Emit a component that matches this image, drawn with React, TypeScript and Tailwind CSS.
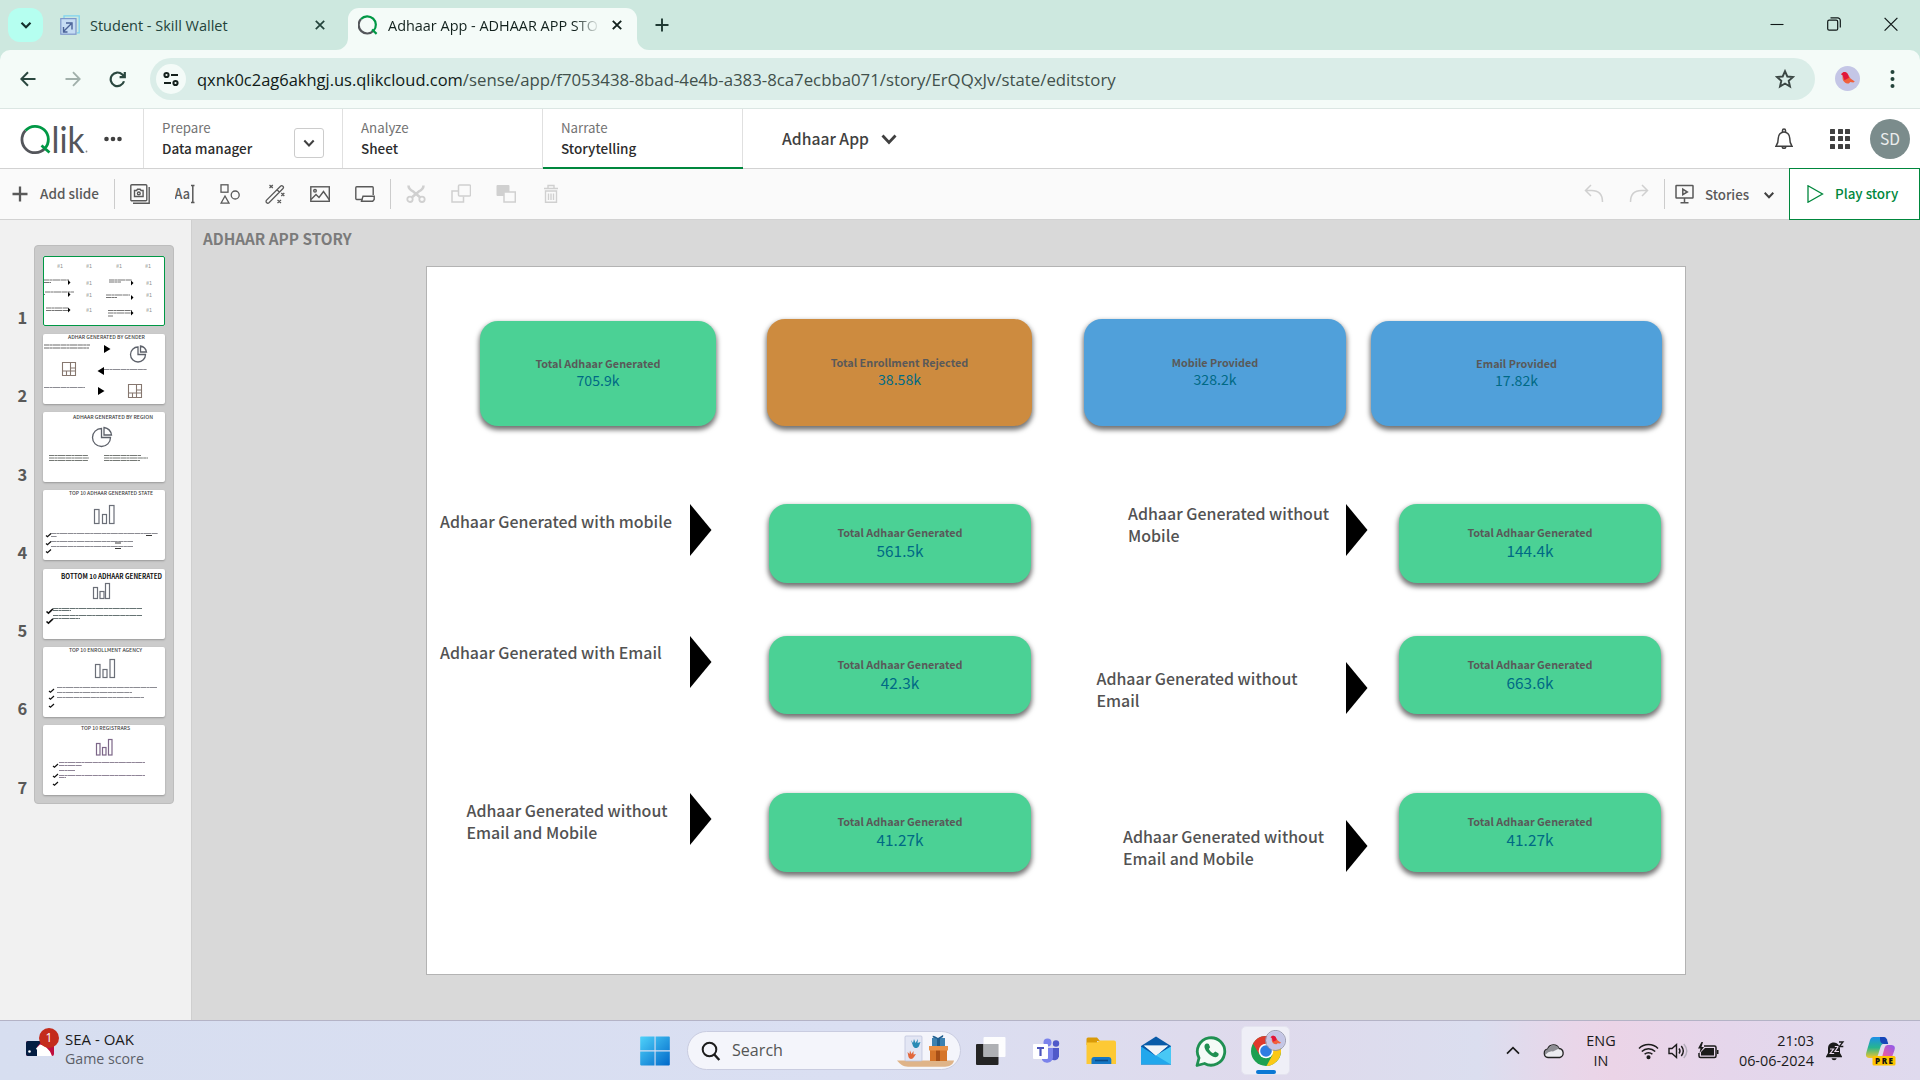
import type { ReactNode } from "react";

type Line = [number, number, number];
type Rect = [number, number, number, number];

/* ---------- Browser chrome ---------- */

function Glyph({ d, w = 20, vb = "0 0 20 20", sw = 1.6, c = "currentColor", children }: { d?: string; w?: number; vb?: string; sw?: number; c?: string; children?: ReactNode }) {
  return (
    <svg width={w} height={w} viewBox={vb} fill="none" stroke={c} strokeWidth={sw} className="shrink-0">
      {d && <path d={d} />}
      {children}
    </svg>
  );
}

function TabStrip() {
  return (
    <div className="flex h-[50px] bg-[#cde8df] font-['Open_Sans',sans-serif]">
      <div className="mt-2 ml-2 flex h-[34px] w-[35px] items-center justify-center rounded-xl bg-[#b5fff0] text-[#14302c]">
        <Glyph w={12} vb="0 0 12 12" sw={2.2} d="M1.5 3.8 6 8.2l4.5-4.4" />
      </div>
      <div className="ml-[17px] flex h-[50px] w-[288px] items-center text-[#23433b]">
        <svg width="20" height="20" viewBox="0 0 20 20" fill="none" className="shrink-0">
          <path d="M4 3V.8h15.200v17H17" stroke="#7fd3f0" strokeWidth="1.300" />
          <rect x=".8" y="3.600" width="15.200" height="15.600" fill="#c5dcf3" stroke="#7d97cb" strokeWidth="1.200" />
          <path d="M3.500 16.500 11 9M6 8h6v6.500M3.500 12v5h4" stroke="#4a6298" strokeWidth="1.400" />
        </svg>
        <span className="mt-px ml-[10px] w-[225px] text-[14.5px] whitespace-nowrap">Student - Skill Wallet</span>
        <Glyph w={10} vb="0 0 10 10" sw={1.7} d="m.8.8 8.4 8.4M9.2.8.8 9.2" />
      </div>
      <div className="relative mt-2 flex h-[42px] w-[289px] items-center rounded-t-[11px] bg-[#f4fbf8] pb-2 pl-[10px] text-[#12211d]">
        <svg className="absolute bottom-0 -left-3" width="12" height="12"><path d="M12 0v12H0A12 12 0 0 0 12 0" fill="#f4fbf8" /></svg>
        <svg className="absolute -right-3 bottom-0" width="12" height="12"><path d="M0 0v12h12A12 12 0 0 1 0 0" fill="#f4fbf8" /></svg>
        <svg width="20" height="20" viewBox="0 0 20 20" fill="none" className="shrink-0">
          <path d="M15.500 15.800A8.400 8.400 0 1 1 3 4" stroke="#54565b" strokeWidth="2.200" />
          <path d="M3 4a8.400 8.400 0 1 1 12.500 11.800M14 14.500l4.600 4.400" stroke="#009845" strokeWidth="2.200" />
        </svg>
        <span className="mt-px ml-[10px] w-[212px] text-[14.450px] whitespace-nowrap [mask-image:linear-gradient(to_right,#000_88%,transparent_100%)]">Adhaar App - ADHAAR APP STO</span>
        <div className="ml-[12px]"><Glyph w={10} vb="0 0 10 10" sw={1.9} d="m.8.8 8.4 8.4M9.2.8.8 9.2" /></div>
      </div>
      <div className="mt-[18px] ml-[18px] text-[#1f3a33]"><Glyph w={14} vb="0 0 14 14" sw={1.9} d="M7 .5v13M.5 7h13" /></div>
      <div className="mt-[17px] mr-[22px] ml-auto flex gap-[43px] text-[#101818]">
        <Glyph w={14} vb="0 0 14 14" sw={1.1} d="M.5 7.5h13" />
        <Glyph w={14} vb="0 0 14 14" sw={1.2}>
          <rect x=".7" y="3.2" width="10" height="10" rx="1.5" />
          <path d="M3.5.8h7.200a2.600 2.600 0 0 1 2.600 2.600v7" />
        </Glyph>
        <Glyph w={14} vb="0 0 14 14" sw={1.2} d="m.6.8 12.800 12.800M13.400.8.6 13.600" />
      </div>
    </div>
  );
}

function Bird({ w }: { w: number }) {
  return (
    <svg width={w} height={w} viewBox="0 0 25 25">
      <circle cx="12.5" cy="12.5" r="12.5" fill="#c4c6e6" />
      <path d="M6 8.200 8 6.600c2-1.200 4-.2 5 2l2.500 4 4.300 3-1.500 1-3-.6-1.500 1.500c-3 .3-6-2-6.200-5L7.500 9Z" fill="#f0603c" />
      <path d="M6 8.200 8 6.600c2-1.200 4-.2 5 2l1 3.200-4.500 2.500L7.500 9Z" fill="#e0163c" />
    </svg>
  );
}

function AddressBar() {
  return (
    <div className="bg-[#cde8df]">
      <div className="flex h-[59px] items-start rounded-t-[10px] border-b border-[#dbe6e3] bg-[#f4fbf8] pt-2 font-['Open_Sans',sans-serif] text-[#2a473f]">
        <div className="mt-[13px] ml-[20px] flex w-[130px]">
          <Glyph w={16} vb="0 0 16 16" sw={2} d="M15.500 8H1.500M8 1.200 1.300 8 8 14.800" />
          <div className="ml-[29px]"><Glyph w={16} vb="0 0 16 16" sw={1.800} c="#a1b0ab" d="M.5 8h14M8 1.200 14.700 8 8 14.800" /></div>
          <div className="ml-[28px]"><Glyph w={17} vb="0 0 17 17" sw={2.200} d="M15 10.300A6.800 6.800 0 1 1 13.300 3.500L15.500 5.700M15.800 1v5.200h-5.200" /></div>
        </div>
        <div className="flex h-[42px] w-[1665px] items-center rounded-full bg-[#daede8] pr-[20px] pl-[6px]">
          <div className="flex size-[30px] items-center justify-center rounded-full bg-[#f4fbf8] text-[#14211d]">
            <Glyph w={16} vb="0 0 16 16" sw={2}>
              <circle cx="3.500" cy="4" r="2.100" /><path d="M8 4h7M1 12h7" /><circle cx="12.500" cy="12" r="2.100" />
            </Glyph>
          </div>
          <div className="mt-px ml-[11px] text-[16.790px] whitespace-nowrap text-[#41504b]">
            <span className="text-[16.480px] text-[#101a17]">qxnk0c2ag6akhgj.us.qlikcloud.com</span>/sense/app/f7053438-8bad-4e4b-a383-8ca7ecbba071/story/ErQQxJv/state/editstory
          </div>
          <svg className="ml-auto text-[#3b4744]" width="20" height="20" viewBox="0 0 20 20" fill="none" stroke="currentColor" strokeWidth="1.900">
            <path d="m10 2.200 2.300 5.300 5.700.5-4.300 3.800 1.300 5.700-5-3-5 3 1.300-5.700L2 8l5.700-.5Z" />
          </svg>
        </div>
        <div className="mt-2 ml-[20px]"><Bird w={25} /></div>
        <svg className="mt-[11px] ml-[30px]" width="5" height="20" fill="#23433b"><circle cx="2.500" cy="3" r="2" /><circle cx="2.500" cy="10" r="2" /><circle cx="2.500" cy="17" r="2" /></svg>
      </div>
    </div>
  );
}

/* ---------- Qlik header ---------- */

function NavSection({ top, label, className, children }: { top: string; label: string; className: string; children?: ReactNode }) {
  return (
    <div className={`relative flex h-[59px] border-l border-[#e0e0e0] pt-[9px] pl-[18px] ${className}`}>
      <div className="leading-5 whitespace-nowrap">
        <div className="text-[13.300px] text-[#737373]">{top}</div>
        <div className="text-[13.500px] font-medium text-[#2c2c2c]">{label}</div>
      </div>
      {children}
    </div>
  );
}

function QlikHeader() {
  return (
    <div className="flex h-[60px] border-b border-[#d2d2d2] bg-white">
      <div className="flex w-[143px]">
        <svg width="143" height="59" viewBox="0 0 143 59" fill="none">
          <path d="M44.800 39.500A12.800 12.800 0 0 1 25.500 21.500" stroke="#54565b" strokeWidth="2.800" />
          <path d="M25.500 21.500A12.800 12.800 0 1 1 44.800 39.500M41.500 36.500l8 7" stroke="#009845" strokeWidth="2.800" />
          <text x="51.500" y="43.500" textLength="33" lengthAdjust="spacingAndGlyphs" fontFamily="Lato" fontSize="36" fill="#54565b">lik</text>
          <circle cx="86.500" cy="42.500" r=".9" fill="#888" />
          <g fill="#404040"><circle cx="106.500" cy="30" r="2.300" /><circle cx="113" cy="30" r="2.300" /><circle cx="119.500" cy="30" r="2.300" /></g>
        </svg>
      </div>
      <NavSection top="Prepare" label="Data manager" className="w-[199px]">
        <div className="absolute top-[19px] left-[150px] flex h-[30px] w-[30px] items-center justify-center rounded-[3px] border border-[#ccc] text-[#404040]">
          <Glyph w={12} vb="0 0 12 12" sw={2} d="M1.300 3.500 6 8.500l4.700-5" />
        </div>
      </NavSection>
      <NavSection top="Analyze" label="Sheet" className="w-[200px]" />
      <NavSection top="Narrate" label="Storytelling" className="w-[201px] border-r">
        <div className="absolute -right-px -bottom-px left-0 h-[2px] bg-[#00873d]" />
      </NavSection>
      <div className="ml-[39px] flex items-center text-[15.700px] font-medium text-[#404040]">
        Adhaar App
        <div className="mt-px ml-[12px]"><Glyph w={16} vb="0 0 16 16" sw={2.800} d="m1.500 4.500 6.500 7 6.500-7" /></div>
      </div>
      <div className="mr-[10px] ml-auto flex items-center text-[#404040]">
        <svg width="18" height="22" viewBox="0 0 18 22" fill="none" stroke="currentColor" strokeWidth="1.500">
          <path d="M1 18.200h16c-2-2.500-2.300-4-2.300-8.200a5.700 6 0 0 0-11.400 0c0 4.200-.3 5.700-2.300 8.200ZM7.500 4V2.500a1.500 1.500 0 0 1 3 0V4M7.200 18.500a1.800 1.800 0 0 0 3.600 0" />
        </svg>
        <div className="ml-[37px] grid grid-cols-3 gap-[2.500px]">
          {Array.from({ length: 9 }, (_, i) => <span key={i} className="size-[5px] rounded-[0.500px] bg-[#404040]" />)}
        </div>
        <div className="ml-[20px] flex size-[40px] items-center justify-center rounded-full bg-[#7b8c8c] text-[15.600px] text-[#ececec]">SD</div>
      </div>
    </div>
  );
}

function Toolbar() {
  const grey = "#595959";
  const off = "#d0d0d0";
  return (
    <div className="flex h-[51px] items-center border-b border-[#d2d2d2] bg-[#fafafa] font-medium text-[#595959]">
      <div className="ml-3"><Glyph w={16} vb="0 0 16 16" sw={2.300} d="M8 .5v15M.5 8h15" /></div>
      <span className="-mt-px ml-3 w-[60px] text-[13.500px] whitespace-nowrap">Add slide</span>
      <div className="ml-[14px] h-[30px] w-px bg-[#ccc]" />
      <div className="ml-[15px] flex gap-[25px]">
        <Glyph c={grey} sw={1.400}>
          <rect x=".8" y=".8" width="16" height="16" rx="1" /><path d="M3 19.200h16.200V3" /><path d="M4.500 6.500h2l1-1.300h2.600l1 1.300h2v6h-8.600Z" /><circle cx="8.800" cy="9.400" r="1.400" />
        </Glyph>
        <Glyph c={grey} sw={1.500}>
          <text x="-.5" y="15" fontFamily="Noto Sans CJK SC" fontSize="14" fontWeight="500" stroke="none" fill={grey} textLength="15.500" lengthAdjust="spacingAndGlyphs">Aa</text>
          <path d="M16 1.500h3.500M16 18.500h3.500M17.800 1.500v17" />
        </Glyph>
        <Glyph c={grey} sw={1.300}>
          <rect x="1" y=".8" width="7" height="7.400" /><circle cx="15.200" cy="11" r="4" /><path d="m5 12 4 7.200H1Z" />
        </Glyph>
        <Glyph c={grey} sw={1.300}>
          <path d="M15.500 2.200a1.700 1.700 0 0 1 2.500 2.300L4 18.800a1.800 1.800 0 0 1-2.600-2.400ZM12 5.800l2.500 2.500M4.500 1l3.300 3M7.800 1 4.500 4M16.300 9l3 3M19.300 9l-3 3M12.500 16l3.500 3M16 16l-3.500 3" />
        </Glyph>
        <Glyph c={grey} sw={1.400}>
          <rect x=".8" y="2.800" width="18.500" height="14.500" /><circle cx="5" cy="6.800" r="1.300" /><path d="m1 15.500 5-5 3 3 4.500-6 6 8.500" />
        </Glyph>
        <Glyph c={grey} sw={1.400}>
          <path d="M7.500 15.500H1.700a.9.900 0 0 1-.9-.9V3.700c0-.5.400-.9.900-.9h15.600c.5 0 .9.400.9.900V11" /><path d="M8 12.200h11.200v3.300l-1.500 1.800H6.500Z" />
        </Glyph>
      </div>
      <div className="ml-[15px] h-[30px] w-px bg-[#ccc]" />
      <div className="ml-[15px] flex gap-[25px]">
        <Glyph c={off} sw={1.800}>
          <circle cx="4" cy="15.300" r="2.700" /><circle cx="16" cy="15.300" r="2.700" />
          <path d="M2.500 1.500c0 3.500 2.500 5 5 6.200l6.500 5.600M17.500 1.500c0 3.500-2.500 5-5 6.200L6 13.300" strokeWidth="2.500" />
        </Glyph>
        <Glyph c={off} sw={1.500}><rect x="7.500" y="1" width="12" height="11" rx="1" /><path d="M7 7H1v11h11.500v-5.500" /></Glyph>
        <Glyph c={off} sw={1.500}><rect x=".5" y="1" width="13" height="11" rx="1" fill={off} stroke="none" /><rect x="8" y="8" width="11.300" height="10" fill="#fafafa" /></Glyph>
        <Glyph c={off} sw={1.400}><path d="M3 4.500h14M7 4V1.500h6V4M4.500 7v11.300h11V7ZM7.500 9.500v6.500M10 9.500v6.500M12.500 9.500v6.500" /></Glyph>
      </div>
      <div className="ml-auto flex items-center">
        <Glyph c={off} sw={1.500} d="M7 1 1.500 6.500 7 12M2 6.500h5.500C14 6.500 18.500 10 18.500 18" />
        <div className="ml-[25px]"><Glyph c={off} sw={1.500} d="m13 1 5.500 5.500L13 12M18 6.500h-5.500C6 6.500 1.500 10 1.500 18" /></div>
        <div className="ml-[15px] h-[30px] w-px bg-[#ccc]" />
        <div className="ml-[10px]">
          <Glyph c={grey} sw={1.500}><rect x="1" y="1.500" width="17" height="12.500" rx=".6" /><path d="M9.500 14v4.500M5.500 18.800h8M7.800 5.200 12.300 8l-4.500 2.600Z" /></Glyph>
        </div>
        <span className="mt-px ml-[10px] w-[45px] text-[13.300px]">Stories</span>
        <div className="mt-0.5 ml-[14px]"><Glyph w={10} vb="0 0 10 10" sw={2} c="#404040" d="m.7 2.800 4.300 4.400 4.300-4.400" /></div>
        <div className="-my-px ml-[15px] flex h-[52px] w-[131px] items-center border border-[#00873d] bg-white pl-[17px] text-[#00873d]">
          <Glyph w={18} vb="0 0 18 18" sw={1.300} d="M1 .8v16.400L15.500 9Z" />
          <span className="-mt-px ml-[10px] text-[13.400px] whitespace-nowrap">Play story</span>
        </div>
      </div>
    </div>
  );
}

/* ---------- Slide thumbnails ---------- */

function TextLines({ lines, c = "#55555f" }: { lines: Line[]; c?: string }) {
  return <g stroke={c} strokeWidth="0.800" opacity="0.850">{lines.map(([x1, x2, y], i) => <path key={i} d={`M${x1} ${y}H${x2}`} strokeDasharray="5.300 .3 3.100 .3 7.400 .4" />)}</g>;
}
function Checks({ at, s = 1 }: { at: [number, number][]; s?: number }) {
  return <g fill="none" stroke="#111" strokeWidth={1.200 * s}>{at.map(([x, y], i) => <path key={i} d={`M${x} ${y}l${1.500 * s} ${1.300 * s}l${3.500 * s} ${-3.300 * s}`} />)}</g>;
}
function Bars({ rects, c = "#6b6f78" }: { rects: Rect[]; c?: string }) {
  return <g fill="none" stroke={c} strokeWidth="1.200">{rects.map(([x, y, w, h], i) => <rect key={i} x={x} y={y} width={w} height={h} />)}</g>;
}
function Title({ x, w, y = 5, bold = false, children }: { x: number; w: number; y?: number; bold?: boolean; children: string }) {
  return <text x={x} y={y} textLength={w} lengthAdjust="spacingAndGlyphs" fontFamily="Noto Sans CJK SC" fontSize={bold ? 6.800 : 5.200} fontWeight={bold ? 700 : 500} fill={bold ? "#111" : "#444"}>{children}</text>;
}
function Pie({ x, y, r }: { x: number; y: number; r: number }) {
  return <path d={`M${x - 1} ${y - r + 1}V${y + 1}H${x + r - 1}A${r} ${r} 0 1 1 ${x - 1} ${y - r + 1}ZM${x + 1.500} ${y - r}V${y - 1.500}H${x + r}A${r} ${r} 0 0 0 ${x + 1.500} ${y - r}Z`} fill="none" stroke="#5d616a" strokeWidth="1.300" />;
}
function Treemap({ x, y }: { x: number; y: number }) {
  return <path d={`M${x} ${y}h13v13h-13ZM${x + 8} ${y}v13M${x} ${y + 8.500}h13M${x + 8} ${y + 5.500}h5M${x + 4} ${y + 8.500}v4.500`} fill="none" stroke="#86776f" strokeWidth="1.100" />;
}

const thumbs: ReactNode[] = [
  <g key="1">
    {[[14, 12], [43, 12], [73, 12], [102, 12], [43, 29], [43, 41], [43, 56], [103, 29], [103, 41], [103, 56]].map(([x, y], i) => <text key={i} x={x} y={y} fontFamily="Noto Sans CJK SC" fontSize="5.500" fill="#909090">#1</text>)}
    <TextLines c="#333" lines={[[1, 26, 24], [1, 8, 26.500], [2, 31, 36], [1, 2, 38.500], [3, 25, 52], [3, 25, 54.500], [66, 89, 24], [66, 78, 26], [63, 87, 39], [63, 74, 41.500], [65, 89, 54.500], [65, 88, 57], [65, 70, 60]]} />
    {[[25, 26.500], [25, 38.500], [25, 54], [88, 27], [88, 41.500], [88, 57]].map(([x, y], i) => <path key={i} d={`M${x} ${y - 2.500}l2.500 2.500l-2.500 2.500Z`} fill="#000" />)}
  </g>,
  <g key="2">
    <Title x={25} w={77}>ADHAR GENERATED BY GENDER</Title>
    <TextLines c="#222" lines={[[1, 47, 11], [1, 46, 14]]} />
    <TextLines lines={[[61, 104, 35.500], [1, 42, 53.500]]} />
    <path d="M61 11v8l6.500-4ZM61 33v8l-6.500-4ZM55 53v8l6.500-4Z" fill="#000" />
    <Pie x={96} y={19.500} r={7.500} /><Treemap x={19.500} y={28.500} /><Treemap x={85.500} y={50.500} />
  </g>,
  <g key="3">
    <Title x={30} w={80} y={7}>ADHAAR GENERATED BY REGION</Title>
    <Pie x={59.500} y={24.500} r={9} />
    <TextLines c="#333a33" lines={[[6, 45, 43.500], [6, 46, 46], [6, 45, 48.500], [61, 98, 43.500], [61, 105, 46], [61, 97, 48.500]]} />
  </g>,
  <g key="4">
    <Title x={26} w={84}>TOP 10 ADHAAR GENERATED STATE</Title>
    <Bars rects={[[51.500, 19.500, 4.500, 14], [59.500, 24.500, 4, 9], [66.500, 15.500, 4.500, 18]]} />
    <Checks at={[[3, 45.500], [3, 53.500], [3, 61.500]]} />
    <TextLines lines={[[8, 115, 43.500], [8, 14, 46.500], [8, 90, 51.500], [8, 90, 56.500]]} />
    <path d="M103 45.500h6M72 53h6M72 58.500h6" stroke="#222" strokeWidth=".9" />
  </g>,
  <g key="5">
    <Title x={18} w={101} y={10} bold>BOTTOM 10 ADHAAR GENERATED</Title>
    <Bars rects={[[50.500, 18.500, 4, 11], [57, 22.500, 4, 7], [62.500, 14.500, 4, 15]]} />
    <Checks s={1.300} at={[[3.500, 42.500], [3.500, 52.500]]} />
    <TextLines c="#1d3030" lines={[[10, 99, 39.500], [10, 28, 41.500], [10, 99, 46.500], [10, 37, 49.500]]} />
  </g>,
  <g key="6">
    <Title x={26} w={73}>TOP 10 ENROLLMENT AGENCY</Title>
    <Bars rects={[[52.500, 17.500, 4.500, 13], [60, 22.500, 4, 8], [67, 12.500, 4.500, 18]]} />
    <Checks at={[[6, 44], [6, 51], [6, 59]]} />
    <TextLines lines={[[14, 114, 40.500], [14, 89, 45.500], [14, 101, 50.500]]} />
  </g>,
  <g key="7">
    <Title x={38} w={49}>TOP 10 REGISTRARS</Title>
    <Bars c="#7c6688" rects={[[53.500, 18.500, 3.500, 11.500], [59.500, 22.500, 3.500, 7.500], [65.500, 14.500, 3.500, 15.500]]} />
    <Checks at={[[10, 41], [10, 51], [10, 59]]} />
    <TextLines c="#5a4a66" lines={[[16, 102, 37.500], [16, 39, 40.500], [16, 32, 45.500], [16, 102, 50.500], [16, 23, 52.500]]} />
  </g>,
];

function Sidebar() {
  return (
    <aside className="flex h-full w-[192px] border-r border-[#cfcfcf] bg-[#f1f1f1] pt-[25px]">
      <div className="flex h-[560px] w-[34px] flex-col gap-[8.300px] pt-[11px]">
        {thumbs.map((_, i) => <div key={i} className="flex h-[70px] items-end pl-[17.500px] text-[16.500px] leading-[18px] font-bold text-[#595959]">{i + 1}</div>)}
      </div>
      <div className="flex h-[559px] w-[140px] flex-col gap-[8.300px] rounded border border-[#bdbdbd] bg-[#cbcbcb] pt-[9.500px] pl-2">
        {thumbs.map((t, i) => (
          <div key={i} className={`h-[70px] w-[122px] shrink-0 overflow-hidden rounded-[2px] bg-white ${i === 0 ? "outline-1 -outline-offset-1 outline-[#009845]" : "shadow-[0_1px_2px_rgba(0,0,0,0.25)]"}`}>
            <svg width="122" height="70" viewBox="0 0 122 70">{t}</svg>
          </div>
        ))}
      </div>
    </aside>
  );
}

/* ---------- Story canvas; coordinates are relative to the slide ---------- */

const cards = [
  { x: 53, y: 54, w: 236, h: 105, pt: 34, big: true, title: "Total Adhaar Generated", value: "705.9k", bg: "bg-[#4bd195]" },
  { x: 340, y: 52, w: 265, h: 107, pt: 35, big: true, title: "Total Enrollment Rejected", value: "38.58k", bg: "bg-[#cd8b3f]" },
  { x: 657, y: 52, w: 262, h: 107, pt: 35, big: true, title: "Mobile Provided", value: "328.2k", bg: "bg-[#50a0da]" },
  { x: 944, y: 54, w: 291, h: 105, pt: 34, big: true, title: "Email Provided", value: "17.82k", bg: "bg-[#50a0da]" },
  { x: 342, y: 237, w: 262, h: 79, pt: 20, big: false, title: "Total Adhaar Generated", value: "561.5k", bg: "bg-[#4bd195]" },
  { x: 972, y: 237, w: 262, h: 79, pt: 20, big: false, title: "Total Adhaar Generated", value: "144.4k", bg: "bg-[#4bd195]" },
  { x: 342, y: 369, w: 262, h: 78, pt: 20, big: false, title: "Total Adhaar Generated", value: "42.3k", bg: "bg-[#4bd195]" },
  { x: 972, y: 369, w: 262, h: 78, pt: 20, big: false, title: "Total Adhaar Generated", value: "663.6k", bg: "bg-[#4bd195]" },
  { x: 342, y: 526, w: 262, h: 79, pt: 20, big: false, title: "Total Adhaar Generated", value: "41.27k", bg: "bg-[#4bd195]" },
  { x: 972, y: 526, w: 262, h: 79, pt: 20, big: false, title: "Total Adhaar Generated", value: "41.27k", bg: "bg-[#4bd195]" },
];

const labels = [
  { x: 13, y: 244, w: 250, text: "Adhaar Generated with mobile" },
  { x: 13, y: 375, w: 250, text: "Adhaar Generated with Email" },
  { x: 39.5, y: 533, w: 215, text: "Adhaar Generated without Email and Mobile" },
  { x: 701, y: 236, w: 215, text: "Adhaar Generated without Mobile" },
  { x: 669.5, y: 401, w: 215, text: "Adhaar Generated without Email" },
  { x: 696, y: 559, w: 215, text: "Adhaar Generated without Email and Mobile" },
];

const arrows = [[263, 237], [263, 369], [263, 526], [919, 237], [919, 395], [919, 553]];

function Story() {
  return (
    <main className="flex-1 bg-[#d9d9d9]">
      <h1 className="h-[46px] pt-[8px] pl-[11px] text-[15.300px] leading-5 font-bold text-[#7b7b7b]">ADHAAR APP STORY</h1>
      <section className="relative ml-[234px] h-[709px] w-[1260px] border border-[#b3b3b3] bg-white">
        {cards.map((c, i) => (
          <div key={i} className={`absolute flex flex-col items-center rounded-[18px] shadow-[0_3px_5px_1px_rgba(0,0,0,0.550)] ${c.bg}`} style={{ left: c.x, top: c.y, width: c.w, height: c.h, paddingTop: c.pt }}>
            <div className="text-[10.820px] leading-4 font-bold text-[#595959]">{c.title}</div>
            <div className={`leading-[18px] text-[#006a85] ${c.big ? "text-[14.100px]" : "mt-px text-[15.400px]"}`}>{c.value}</div>
          </div>
        ))}
        {labels.map((l, i) => (
          <p key={i} className="absolute text-[15.940px] leading-[22px] font-medium text-[#525252]" style={{ left: l.x, top: l.y, width: l.w }}>{l.text}</p>
        ))}
        {arrows.map(([x, y], i) => (
          <svg key={i} className="absolute" style={{ left: x, top: y }} width="22" height="52"><path d="M0 0 21.500 26 0 52Z" fill="#000" /></svg>
        ))}
      </section>
    </main>
  );
}

/* ---------- Taskbar ---------- */

function StartMenuIcons() {
  return (
    <div className="flex items-center">
      <svg width="30" height="30" viewBox="0 0 30 30">
        <defs><linearGradient id="win" x1="0" y1="0" x2="1" y2="1"><stop offset="0" stopColor="#4fd2fa" /><stop offset="1" stopColor="#0068c9" /></linearGradient></defs>
        <path d="M1 .5h13.500v13.700H.2V1.300Q.2.500 1 .5ZM15.600.500H29q.8 0 .8.8v12.900H15.600ZM.2 15.400h14.300v14H1q-.8 0-.8-.8ZM15.600 15.400h14.200v13.200q0 .8-.8.8H15.600Z" fill="url(#win)" />
      </svg>
      <div className="ml-[17px] flex h-[39px] w-[274px] items-center rounded-full border border-[#c9cce0] bg-[#f4f5fb] pr-[5px] pl-[13px]">
        <Glyph sw={2} c="#1c1c1c"><circle cx="8.500" cy="8.500" r="6.800" /><path d="m13.300 13.500 5 5.500" strokeWidth="2.400" /></Glyph>
        <span className="ml-[11px] font-['Open_Sans',sans-serif] text-[16.100px] text-[#555]">Search</span>
        <svg className="ml-auto" width="59" height="32" viewBox="0 0 59 32">
          <path d="M1 25.500h57c-1 4-4 6.200-9 6.200H12c-5 0-8-2.500-11-6.200Z" fill="#dfb489" />
          <rect x="9" y="1" width="17" height="25" rx="1" fill="#e3e6f4" stroke="#b9bfd8" strokeWidth=".7" />
          <path d="m15 5 2 3 1-4 1.500 4L22 4l-.5 4 3-1-1.500 4c-1.500 3-5 2.500-6 0Z" fill="#2a8bb5" />
          <path d="m11.500 17 2 2 .5-3.500 1.500 3.500 2-3v3.500l2.500-.5-2 3c-1.500 2.500-4.500 2.500-5.500 0Z" fill="#e2673b" />
          <rect x="34" y="11" width="17" height="15" fill="#d5752a" /><rect x="40" y="11" width="4" height="15" fill="#a64f17" /><rect x="33" y="11" width="19" height="4.500" fill="#e99147" />
          <rect x="36" y="3" width="13" height="8" fill="#3c81b0" /><path d="M42 3c-5-3-6-3-5-.5L42 4c4-1 6-2 5-4Z" fill="#1e5e8e" /><rect x="41" y="3" width="3" height="8" fill="#1e5e8e" />
        </svg>
      </div>
      <svg className="ml-[15px]" width="30" height="30" viewBox="0 0 30 30">
        <rect x="0" y="8" width="22.500" height="21" rx="1" fill="#242424" /><rect x="7.500" y="1" width="22" height="20" rx="1" fill="#fff" fillOpacity=".92" /><rect x="7.500" y="8" width="15" height="13" fill="#aeb0b4" />
      </svg>
      <svg className="ml-[27px]" width="27" height="26" viewBox="0 0 27 26">
        <circle cx="23" cy="5.500" r="3.200" fill="#5059c9" /><circle cx="14.500" cy="4.500" r="4" fill="#7b83eb" />
        <path d="M18.500 10H26v8.500a5 5 0 0 1-7.500 3Z" fill="#5059c9" /><path d="M9 10h11v9.500a6 6 0 0 1-11 2.500Z" fill="#7b83eb" />
        <rect x="0" y="6" width="15" height="15" rx="1" fill="#fff" /><path d="M4 10h7M7.500 10v8" stroke="#4b53bc" strokeWidth="2.200" />
      </svg>
      <svg className="ml-[26px]" width="31" height="28" viewBox="0 0 31 28">
        <path d="M.5 2q0-1.500 1.500-1.500h9l3 3.500h-3v4H.5Z" fill="#d99a08" /><path d="M.5 5.500h10L14 3.500h14q2 0 2 2V27H.5Z" fill="#fdc935" />
        <path d="M5.500 27v-4.500q0-2.500 2.500-2.500h15q2.300 0 2.300 2.500V27Z" fill="#1577c4" /><path d="M9 23.500h13" stroke="#0b4b86" strokeWidth="1.600" />
      </svg>
      <svg className="ml-[23px]" width="32" height="29" viewBox="0 0 32 29">
        <path d="M1 10 16 .5 31 10v18.500H1Z" fill="#0a5ba8" /><path d="M4 9.500h24L16 20Z" fill="#f3f6fa" /><path d="M1 10.500 16 20 31 10.500v18H1Z" fill="#22a7ec" /><path d="M4 9.800h24L16.500 18.500Z" fill="#f1f4f8" /><path d="M31 10.500 16 19.500 31 28.500Z" fill="#48c8f5" />
      </svg>
      <svg className="ml-[23px]" width="32" height="32" viewBox="0 0 32 32">
        <path d="M2 30.500 4 23A13.700 13.700 0 1 1 9.500 28.500Z" fill="#f4fbf7" stroke="#1f9052" strokeWidth="2.800" strokeLinejoin="round" />
        <path d="M11.500 8.500c-3 1.200-2.500 5 .5 8.500s7.500 6.500 10.500 4.500c1.300-1 1.500-2.500.8-3.200l-3-1.800-2.200 1.800c-2-1-3.300-2.200-4.300-4.200l1.300-1.800-1.300-3.200q-.8-1-2.300-.6Z" fill="#1f9052" />
      </svg>
      <div className="relative ml-[14px] flex h-[49px] w-[49px] items-center justify-center rounded-[5px] border border-[#e4e3ef] bg-[#efeff7]">
        <svg width="30" height="30" viewBox="0 0 30 30">
          <circle cx="15" cy="15" r="15" fill="#1da051" />
          <path d="M2 7.500A15 15 0 0 1 28 7.500H15L8.500 18.700Z" fill="#e03a2d" />
          <path d="M28 7.500A15 15 0 0 1 15.500 30l6-11.200L15 7.500Z" fill="#fbc816" />
          <circle cx="15" cy="15" r="7.300" fill="#fff" /><circle cx="15" cy="15" r="5.800" fill="#2f7de1" />
        </svg>
        <div className="absolute top-[3px] right-[3px] rounded-full border border-[#8d90a8]"><Bird w={19} /></div>
        <div className="absolute bottom-0 left-[14px] h-[4px] w-[20px] rounded-full bg-[#0a78d4]" />
      </div>
    </div>
  );
}

function Taskbar() {
  return (
    <footer className="flex h-[60px] border-t border-[#b4b3c6] bg-[linear-gradient(to_right,#d7def0_0%,#dadff2_45%,#dfdaec_66%,#dbdeef_77%,#e9d6e9_82%,#ebd4e7_84%,#e5d6eb_90%,#dfdaee_100%)] font-['Open_Sans',sans-serif] text-[#1b1b1b]">
      <div className="relative ml-[26px] w-[39px]">
        <svg className="mt-[20px]" width="28" height="15" viewBox="0 0 28 15"><rect width="28" height="15" rx="2" fill="#bf0d3e" /><path d="M2 0h14l-5 6 2 9H2a2 2 0 0 1-2-2V2q0-2 2-2Z" fill="#041e42" /><path d="M11 15V9L10 7.500l4-4 5 1.500 5 5.500 2 4.500Z" fill="#fff" /><circle cx="3.500" cy="10.500" r="1.300" fill="#fff" /></svg>
        <div className="absolute top-[7px] left-[13px] flex size-[20px] items-center justify-center rounded-full bg-[#c42b1c] text-xs text-white">1</div>
      </div>
      <div className="w-[575px] pt-[8px] leading-[20px]">
        <div className="text-[15px]">SEA - OAK</div>
        <div className="text-[14.200px] text-[#5c5f68]">Game score</div>
      </div>
      <StartMenuIcons />
      <div className="mr-[24px] ml-auto flex items-center text-[14.400px] leading-[20px]">
        <Glyph w={14} vb="0 0 14 14" sw={1.700} d="m1 9.700 6-6 6 6" />
        <svg className="ml-[23px]" width="22" height="16" viewBox="0 0 22 16"><path d="M5 14.500a4.200 4.200 0 0 1-.3-8.300A6 6 0 0 1 16 5.500a4.600 4.600 0 0 1 .8 9Z" fill="#ececf0" stroke="#222" strokeWidth="1.300" /><path d="M2 12q4-4.500 8-3.500l6-3A6 6 0 0 0 5 6.300Q1 7 2 12Z" fill="#8d8d93" /></svg>
        <div className="ml-[19px] w-[34px] text-center">ENG<br />IN</div>
        <svg className="ml-[20px]" width="21" height="18" viewBox="0 0 21 18" fill="none" stroke="#1b1b1b" strokeWidth="1.500"><path d="M1 6.500a13.500 13.500 0 0 1 19 0M3.800 9.500a9.500 9.500 0 0 1 13.400 0M6.600 12.300a5.500 5.500 0 0 1 7.800 0" /><circle cx="10.500" cy="15.300" r="1.300" fill="#1b1b1b" /></svg>
        <svg className="ml-[9px]" width="21" height="18" viewBox="0 0 21 18" fill="none" stroke="#1b1b1b" strokeWidth="1.400"><path d="M1 6.500h3L8.500 2.500v13L4 11.500H1ZM11 6.500q2 2.500 0 5M13.300 4q4 5 0 10" /><path d="M15.800 2q6 7 0 14" stroke="#b3adba" /></svg>
        <svg className="ml-[8px]" width="22" height="18" viewBox="0 0 22 18"><path d="M7 4h10.500q1.500 0 1.500 1.500v8.500q0 1.500-1.500 1.500H3.500Q2 15.500 2 14v-3" fill="none" stroke="#1b1b1b" strokeWidth="1.500" /><path d="M8 6h9v7.500H4V10Zm12 2h1.500v4H20Z" fill="#1b1b1b" /><path d="M4.500 0 1 6.500h2.500L2.500 11l4.500-6H4.500L6 0Z" fill="#1b1b1b" /></svg>
        <div className="ml-[15px] w-[80px] text-right whitespace-nowrap">21:03<br />06-06-2024</div>
        <svg className="ml-[11px]" width="20" height="20" viewBox="0 0 20 20"><path d="M9 1.500c-4 0-6 2.500-6 6v4.500L1 15.500v.8h16v-.8L15 12V7.500Q14 2 9 1.500ZM6.500 17.300h5.200q-.5 2-2.600 2t-2.600-2Z" fill="#1b1b1b" /><path d="M5 8h3.500L5.200 12.500h4" stroke="#e8d8ec" strokeWidth="1.200" fill="none" /><path d="M9.800 5.500h3.500L10 10.500h4" stroke="#e8d8ec" strokeWidth="1.200" fill="none" /><path d="M14 1h4l-3.700 4.500h4" stroke="#1b1b1b" strokeWidth="1.300" fill="none" /></svg>
        <svg className="mt-px ml-[20px]" width="31" height="30" viewBox="0 0 31 30">
          <defs>
            <linearGradient id="cpA" x1="0" y1="0" x2="0" y2="1"><stop offset="0" stopColor="#1c8ee8" /><stop offset=".5" stopColor="#27b58f" /><stop offset="1" stopColor="#f3c629" /></linearGradient>
            <linearGradient id="cpB" x1="1" y1="0" x2="0" y2="1"><stop offset="0" stopColor="#8a5cf0" /><stop offset=".6" stopColor="#e55aa8" /><stop offset="1" stopColor="#f58a5c" /></linearGradient>
          </defs>
          <path d="M8.500 1h10q2 0 3 2l1 4.500h-3q-3 0-4 3.500l-2.500 8q-.8 3-4 3H4Q0 21.500 1.200 17L5 4Q6 1 8.500 1Z" fill="url(#cpA)" />
          <path d="M22.500 9h4Q31 9.500 29.500 14l-3 8.500q-1 3.500-4.500 3.500h-9q3-.5 3.700-3.500L19.500 12q.8-3 3-3Z" fill="url(#cpB)" />
          <path d="M15 1h4q2 0 3 2.500L23.200 8h-4q-3.500 0-4.200-4Z" fill="#1745b8" />
          <rect x="7.500" y="20" width="23" height="9.500" rx="1.500" fill="#fdc400" />
          <text x="10" y="27.700" fontFamily="Open Sans" fontWeight="800" fontSize="8" textLength="18" fill="#111">PRE</text>
        </svg>
      </div>
    </footer>
  );
}

export default function App() {
  return (
    <div className="flex h-[1080px] w-[1920px] flex-col overflow-hidden bg-white font-['Noto_Sans_CJK_SC',sans-serif]">
      <TabStrip />
      <AddressBar />
      <QlikHeader />
      <Toolbar />
      <div className="flex h-[800px]">
        <Sidebar />
        <Story />
      </div>
      <Taskbar />
    </div>
  );
}
